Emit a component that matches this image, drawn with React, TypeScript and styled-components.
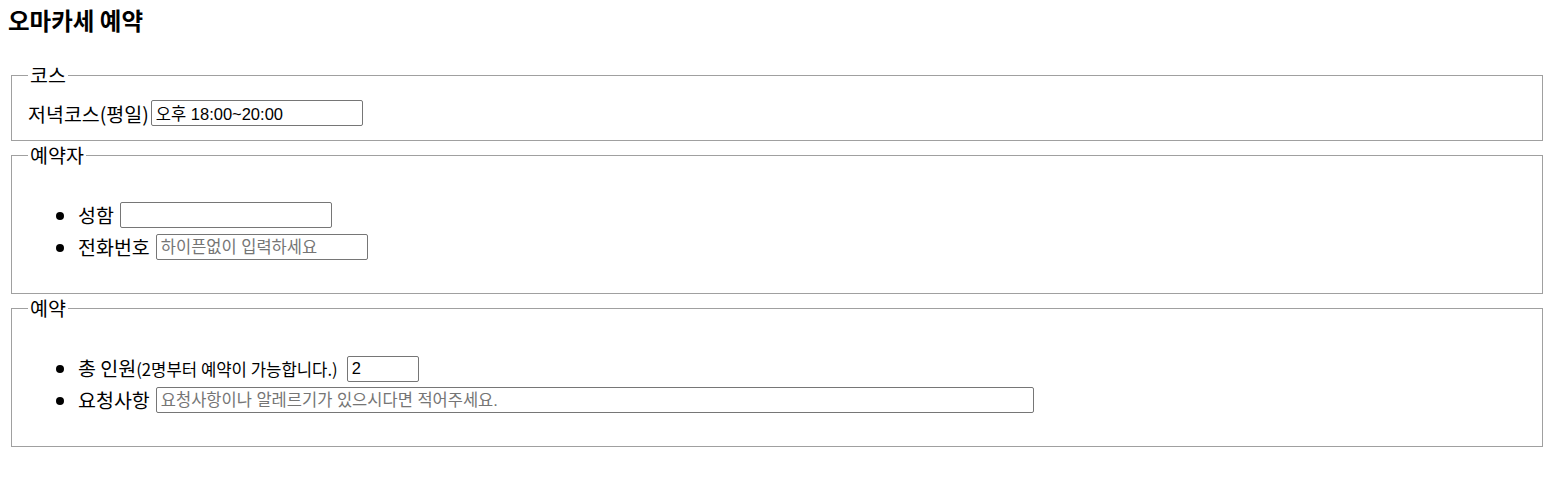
import React from "react";
import styled, { createGlobalStyle } from "styled-components";

const GlobalStyle = createGlobalStyle`
  html, body {
    margin: 0;
    padding: 0;
    background: #ffffff;
  }

  body {
    font-family: "Noto Sans CJK KR", "Noto Sans", sans-serif;
    color: #000000;
  }
`;

const Page = styled.main`
  padding: 5px 4px 0 11px;
`;

const Title = styled.h1`
  margin: 0 0 26px -3px;
  font-size: 23.5px;
  line-height: 30px;
  font-weight: 700;
`;

const Group = styled.fieldset`
  margin: 0;
  padding: 10px 16px 12px;
  border: 1px solid #a0a0a0;
  min-width: 0;
`;

const Legend = styled.legend`
  padding: 0 2px;
  font-size: 19.5px;
  line-height: 28px;
`;

const CourseRow = styled.div`
  display: flex;
  align-items: center;
  height: 28px;
  margin-bottom: 1px;
  font-size: 19.5px;
  gap: 2px;
`;

const List = styled.ul`
  margin: 20px 0 18px;
  padding-left: 50px;
  list-style: disc;
`;

const Item = styled.li`
  height: 32px;
  line-height: 32px;
  font-size: 19.5px;
`;

const ItemInner = styled.div<{ $gap?: number }>`
  display: flex;
  align-items: center;
  height: 32px;
  gap: ${({ $gap }) => ($gap ?? 6) + "px"};
`;

const Note = styled.span`
  font-size: 16.7px;
`;

const Field = styled.input<{ $width: number }>`
  box-sizing: border-box;
  width: ${({ $width }) => $width + "px"};
  height: 26px;
  margin: 0;
  padding: 1px 4px;
  border: 1px solid #767676;
  border-radius: 2px;
  background: #ffffff;
  font-family: "Liberation Sans", "Noto Sans CJK KR", sans-serif;
  font-size: 16.5px;
  color: #000000;
  outline: none;

  &::placeholder {
    color: #757575;
  }

  &::-webkit-outer-spin-button,
  &::-webkit-inner-spin-button {
    -webkit-appearance: none;
    margin: 0;
  }
`;

const App = () => {
  return (
    <>
      <GlobalStyle />
      <Page>
        <Title>오마카세 예약</Title>

        <Group>
          <Legend>코스</Legend>
          <CourseRow>
            저녁코스(평일)
            <Field $width={212} defaultValue="오후 18:00~20:00" />
          </CourseRow>
        </Group>

        <Group>
          <Legend>예약자</Legend>
          <List>
            <Item>
              <ItemInner>
                성함
                <Field $width={212} />
              </ItemInner>
            </Item>
            <Item>
              <ItemInner>
                전화번호
                <Field $width={212} placeholder="하이픈없이 입력하세요" />
              </ItemInner>
            </Item>
          </List>
        </Group>

        <Group>
          <Legend>예약</Legend>
          <List>
            <Item>
              <ItemInner $gap={9}>
                <span>
                  총 인원<Note>(2명부터 예약이 가능합니다.)</Note>
                </span>
                <Field $width={72} type="number" defaultValue={2} />
              </ItemInner>
            </Item>
            <Item>
              <ItemInner>
                요청사항
                <Field
                  $width={878}
                  placeholder="요청사항이나 알레르기가 있으시다면 적어주세요."
                />
              </ItemInner>
            </Item>
          </List>
        </Group>
      </Page>
    </>
  );
};

export default App;
